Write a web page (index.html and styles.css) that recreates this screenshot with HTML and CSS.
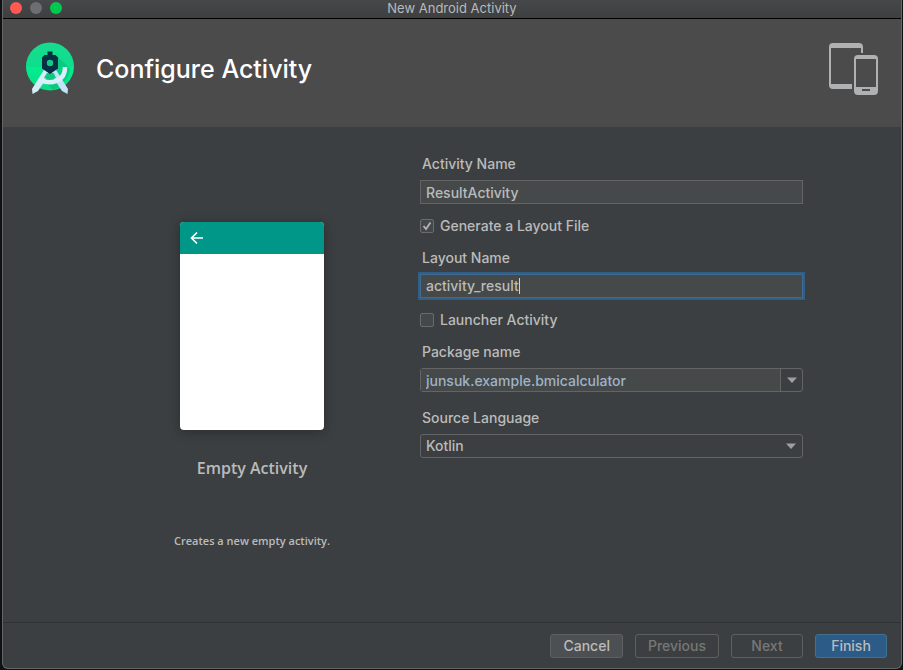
FILE: index.html
```html
<!DOCTYPE html>
<html lang="en">
<head>
    <meta charset="UTF-8">
    <meta name="viewport" content="width=device-width, initial-scale=1.0">
    <title>New Android Activity</title>
    <link rel="stylesheet" href="styles.css">
</head>
<body>
    <div class="window">
        <!-- Title bar -->
        <div class="titlebar">
            <div class="lights">
                <button class="light close" type="button" aria-label="Close"></button>
                <button class="light minimize" type="button" aria-label="Minimize"></button>
                <button class="light zoom" type="button" aria-label="Zoom"></button>
            </div>
            <span class="window-title">New Android Activity</span>
        </div>

        <!-- Wizard header -->
        <header class="header">
            <svg class="logo" width="50" height="54" viewBox="0 0 50 54" aria-hidden="true">
                <defs>
                    <linearGradient id="disc" x1="0" y1="0" x2="0" y2="1">
                        <stop offset="0" stop-color="#16dc8f"/>
                        <stop offset="0.5" stop-color="#0ede8c"/>
                        <stop offset="0.51" stop-color="#00ee8f"/>
                        <stop offset="1" stop-color="#0bdc86"/>
                    </linearGradient>
                </defs>
                <circle cx="25" cy="24.500" r="24" fill="url(#disc)"/>
                <path d="M32 14L45 26.500C45 34 38 44 28 48L18 38L25 30Z" fill="#0ba873" opacity="0.4"/>
                <path d="M19.500 27L25 31L13 49L7.500 52L7 47Z" fill="#d4eef9"/>
                <path d="M30.500 27L25 31L37 49L42.500 52L43 47Z" fill="#c2e2f5"/>
                <path d="M21.500 31.500L25 30L29 31.500L31 36Q25 38.500 19 36Z" fill="#0fc981"/>
                <path d="M15 37.500C25 43.500 40.500 39.500 40 25" fill="none" stroke="#d9effa" stroke-width="4.500"/>
                <path d="M22.500 9.500H27.500V13H30.500L33 15.500V26.500L25 32L17 26.500V15.500L19.500 13H22.500Z" fill="#073042"/>
                <circle cx="25" cy="21" r="3.200" fill="#14c987"/>
            </svg>
            <h1>Configure Activity</h1>
            <svg class="devices" width="50" height="54" viewBox="0 0 50 54" aria-hidden="true">
                <path fill="#afb1b3" d="M4 1H30Q34 1 34 5V11H32V6H2V42H23V47H4Q0 47 0 43V5Q0 1 4 1Z"/>
                <path fill="#afb1b3" fill-rule="evenodd" d="M29 13H45Q49 13 49 17V49Q49 53 45 53H29Q25 53 25 49V17Q25 13 29 13ZM27 17V45H47V17ZM33 47V49H41V47Z"/>
            </svg>
        </header>

        <!-- Template preview and settings -->
        <main class="content">
            <section class="preview">
                <div class="phone">
                    <div class="phone-bar">
                        <svg width="14" height="14" viewBox="0 0 14 14" aria-hidden="true">
                            <path d="M13 7H2M7 1.500L1.500 7L7 12.500" fill="none" stroke="#fff" stroke-width="1.700"/>
                        </svg>
                    </div>
                </div>
                <h2>Empty Activity</h2>
                <p>Creates a new empty activity.</p>
            </section>

            <form class="settings" id="settings">
                <label class="label" for="activity-name">Activity Name</label>
                <input class="field" type="text" id="activity-name" value="ResultActivity">

                <div class="check">
                    <input type="checkbox" id="generate-layout" checked>
                    <label for="generate-layout">Generate a Layout File</label>
                </div>

                <label class="label" for="layout-name">Layout Name</label>
                <div class="field active">
                    <input type="text" id="layout-name" value="activity_result">
                    <span class="caret"></span>
                </div>

                <div class="check">
                    <input type="checkbox" id="launcher">
                    <label for="launcher">Launcher Activity</label>
                </div>

                <label class="label" for="package-name">Package name</label>
                <div class="combo">
                    <input type="text" id="package-name" value="junsuk.example.bmicalculator">
                    <button type="button" aria-label="Show packages">
                        <svg width="10" height="6" viewBox="0 0 10 6" aria-hidden="true"><path d="M0 0.500H10L5 6Z" fill="#9da0a2"/></svg>
                    </button>
                </div>

                <label class="label language" for="source-language">Source Language</label>
                <div class="dropdown">
                    <select id="source-language">
                        <option>Kotlin</option>
                        <option>Java</option>
                    </select>
                    <svg width="10" height="6" viewBox="0 0 10 6" aria-hidden="true"><path d="M0 0.500H10L5 6Z" fill="#9da0a2"/></svg>
                </div>
            </form>
        </main>

        <!-- Wizard buttons -->
        <footer class="footer">
            <button class="btn" type="button">Cancel</button>
            <button class="btn" type="button" disabled>Previous</button>
            <button class="btn" type="button" disabled>Next</button>
            <button class="btn primary" type="submit" form="settings">Finish</button>
        </footer>
    </div>
</body>
</html>
```
FILE: styles.css
```css
* {
    margin: 0;
    padding: 0;
    box-sizing: border-box;
}

body {
    background: #101112;
    color: #bbbbbb;
    font: 500 14px/16px Inter, "Liberation Sans", sans-serif;
}

input,
select,
button {
    font: inherit;
    color: inherit;
}

.window {
    display: flex;
    flex-direction: column;
    min-height: calc(100vh - 1px);
    margin: 0 1px 0 2px;
    background: #3c3f41;
    border: 1px solid #636567;
    border-top: none;
    border-radius: 0 0 6px 6px;
    overflow: hidden;
}

/* Title bar */
.titlebar {
    display: grid;
    grid-template-columns: 1fr auto 1fr;
    align-items: center;
    height: 19px;
    padding: 0 7px 2px;
    background: linear-gradient(#47484a, #3d3f40);
    border-bottom: 1px solid #000;
}

.lights {
    display: flex;
    gap: 8px;
}

.light {
    width: 12px;
    height: 12px;
    border: none;
    border-radius: 50%;
    background: #6d6e71;
}

.close {
    background: #ff5a52;
}

.zoom {
    background: #00ca4e;
}

.window-title {
    font-size: 13px;
    font-weight: 400;
    color: #b9babb;
}

/* Header */
.header {
    display: flex;
    align-items: center;
    height: 108px;
    padding: 0 22px 8px;
    background: #4b4b4b;
}

h1 {
    flex: 1;
    margin-left: 21px;
    font-size: 25px;
    font-weight: 500;
    line-height: 32px;
    color: #fff;
}

/* Content */
.content {
    flex: 1;
    display: grid;
    grid-template-columns: 160px 1fr;
    gap: 88px;
    align-items: start;
    padding: 29px 98px 29px 169px;
}

.preview {
    display: flex;
    flex-direction: column;
    align-items: center;
    padding-top: 66px;
    font-family: "Open Sans", "Noto Sans", sans-serif;
    white-space: nowrap;
}

.phone {
    width: 144px;
    height: 208px;
    background: #fff;
    border-radius: 4px;
    box-shadow: 0 2px 12px rgba(0, 0, 0, 0.3);
    overflow: hidden;
}

.phone-bar {
    display: flex;
    align-items: center;
    height: 32px;
    padding-left: 10px;
    background: #009688;
}

h2 {
    margin-top: 26px;
    font-size: 16px;
    font-weight: 600;
    line-height: 24px;
}

.preview p {
    margin-top: 53px;
    font-size: 11px;
    font-weight: 600;
}

.settings {
    display: flex;
    flex-direction: column;
}

.label {
    margin: 0 2px 8px;
}

.field,
.combo,
.dropdown {
    width: 100%;
    height: 24px;
    border: 1px solid #646464;
}

.field {
    padding: 0 5px;
    background: #45494a;
    outline: none;
}

.active {
    display: flex;
    align-items: center;
    border-color: #3d6b94;
    box-shadow: 0 0 0 2px #335f87;
}

.active input {
    field-sizing: content;
    background: none;
    border: none;
    outline: none;
    caret-color: transparent;
}

.caret {
    width: 1px;
    height: 16px;
    background: #d0d0d0;
}

.check {
    display: flex;
    align-items: center;
    gap: 6px;
    margin: 14px 0 16px;
}

.check input {
    appearance: none;
    width: 14px;
    height: 14px;
    background: #43494a;
    border: 1px solid #6b6b6b;
    border-radius: 2px;
}

.check input:checked {
    background: #43494a url("data:image/svg+xml,%3Csvg xmlns='http://www.w3.org/2000/svg' viewBox='0 0 12 12'%3E%3Cpath d='M2.500 6L5 9L9.500 2.500' fill='none' stroke='%23b4b4b4' stroke-width='1.800'/%3E%3C/svg%3E");
}

.combo,
.dropdown {
    display: flex;
    align-items: center;
    border-radius: 3px;
}

.combo input {
    flex: 1;
    min-width: 0;
    height: 22px;
    padding: 0 5px;
    background: #45494a;
    border: none;
    color: #9fb3c6;
}

.combo button {
    display: flex;
    align-items: center;
    justify-content: center;
    width: 22px;
    height: 22px;
    background: none;
    border: none;
    border-left: 1px solid #646464;
}

.language {
    margin-top: 18px;
}

.dropdown {
    display: grid;
    padding: 0 6px 0 5px;
}

.dropdown select,
.dropdown svg {
    grid-area: 1 / 1;
}

.dropdown select {
    appearance: none;
    width: 100%;
    background: none;
    border: none;
    outline: none;
}

.dropdown svg {
    justify-self: end;
    pointer-events: none;
}

/* Footer */
.footer {
    display: flex;
    justify-content: flex-end;
    gap: 12px;
    padding: 11px 14px 10px;
    border-top: 1px solid #2f3133;
}

.btn {
    min-width: 72px;
    height: 24px;
    padding: 0 12px;
    background: #4c5052;
    border: 1px solid #5e6060;
    border-radius: 3px;
}

.btn:disabled {
    background: none;
    color: #777777;
}

.primary {
    background: #2d5b87;
    border-color: #43708f;
}
```
